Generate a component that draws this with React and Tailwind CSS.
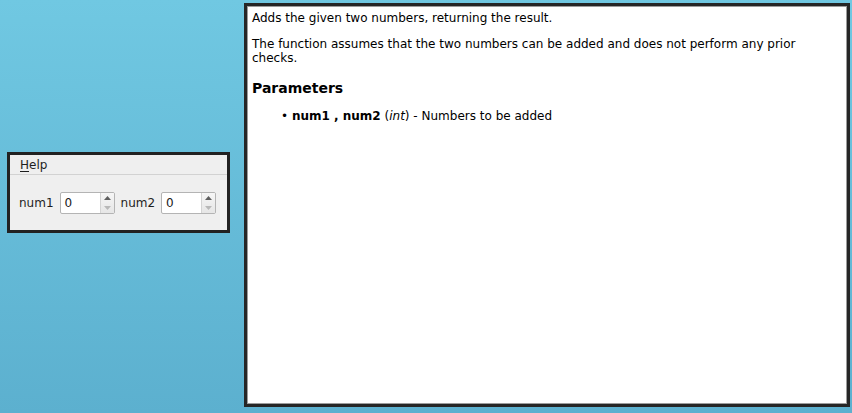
import React from "react";

function SpinBox() {
  return (
    <div className="flex h-[22px] w-[55px] rounded-[2px] border border-[#b4b4b4] bg-white overflow-hidden">
      <div className="flex-1 pl-[4px] flex items-center text-[12px] leading-[14px] text-[#1a1a1a]">0</div>
      <div className="w-[14px] flex flex-col border-l border-[#d4d4d4] bg-gradient-to-b from-[#f6f6f6] to-[#e6e6e6]">
        <div className="flex-1 flex items-center justify-center">
          <svg width="7" height="4" viewBox="0 0 7 4"><polygon points="3.5,0 7,4 0,4" fill="#5e5e5e" /></svg>
        </div>
        <div className="flex-1 flex items-center justify-center">
          <svg width="7" height="4" viewBox="0 0 7 4"><polygon points="0,0 7,0 3.5,4" fill="#b8b8b8" /></svg>
        </div>
      </div>
    </div>
  );
}

export default function App() {
  return (
    <div className="relative w-[852px] h-[413px] overflow-hidden bg-gradient-to-b from-[#70c8e2] to-[#5cb0cf] font-['DejaVu_Sans',sans-serif]">
      {/* Left app window */}
      <div className="absolute left-[7px] top-[152px] w-[223px] h-[81px] border-[3px] border-[#222222] bg-[#efefef] flex flex-col">
        <div className="h-[19px] pl-[10px] pt-[3px] text-[12px] leading-[14px] text-[#1e1e1e]">
          <span className="underline underline-offset-[2px]">H</span>elp
        </div>
        <div className="h-px bg-[#d2d2d2]" />
        <div className="flex-1 flex items-center pl-[9px] text-[12px] leading-[14px] text-[#1e1e1e]">
          <span>num1</span>
          <div className="ml-[6px]"><SpinBox /></div>
          <span className="ml-[6px]">num2</span>
          <div className="ml-[6px]"><SpinBox /></div>
        </div>
      </div>

      {/* Right help window */}
      <div className="absolute left-[244px] top-[3px] w-[606px] h-[404px] border-[3px] border-[#262626] bg-white">
        <div className="w-full h-full border border-[#9c9c9c] px-[4px] pt-[4px] text-[12px] leading-[14px] text-black">
          <p>Adds the given two numbers, returning the result.</p>
          <p className="mt-[12px]">The function assumes that the two numbers can be added and does not perform any prior checks.</p>
          <h3 className="mt-[15px] text-[14px] leading-[17px] font-bold">Parameters</h3>
          <div className="mt-[12px] pl-[29px]">
            • <b>num1 , num2</b> (<i>int</i>) - Numbers to be added
          </div>
        </div>
      </div>
    </div>
  );
}
